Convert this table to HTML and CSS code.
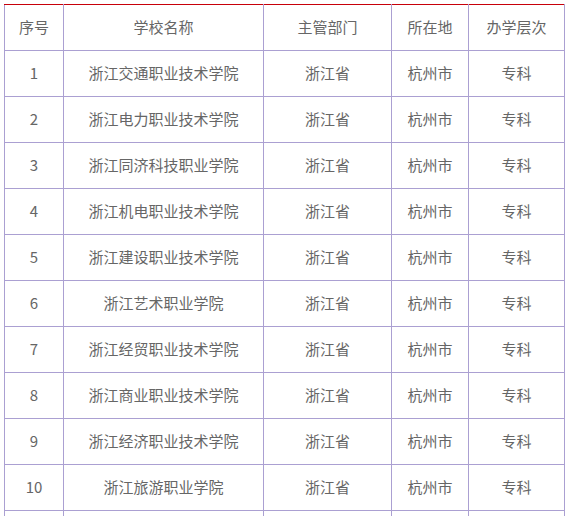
FILE: index.html
```html
<!DOCTYPE html>
<html lang="zh">
<head>
<meta charset="utf-8">
<link rel="stylesheet" href="styles.css">
</head>
<body>
<table class="list">
<colgroup>
<col class="c1"><col class="c2"><col class="c3"><col class="c4"><col class="c5">
</colgroup>
<thead>
<tr><td>序号</td><td>学校名称</td><td>主管部门</td><td>所在地</td><td>办学层次</td></tr>
</thead>
<tbody>
<tr><td>1</td><td>浙江交通职业技术学院</td><td>浙江省</td><td>杭州市</td><td>专科</td></tr>
<tr><td>2</td><td>浙江电力职业技术学院</td><td>浙江省</td><td>杭州市</td><td>专科</td></tr>
<tr><td>3</td><td>浙江同济科技职业学院</td><td>浙江省</td><td>杭州市</td><td>专科</td></tr>
<tr><td>4</td><td>浙江机电职业技术学院</td><td>浙江省</td><td>杭州市</td><td>专科</td></tr>
<tr><td>5</td><td>浙江建设职业技术学院</td><td>浙江省</td><td>杭州市</td><td>专科</td></tr>
<tr><td>6</td><td>浙江艺术职业学院</td><td>浙江省</td><td>杭州市</td><td>专科</td></tr>
<tr><td>7</td><td>浙江经贸职业技术学院</td><td>浙江省</td><td>杭州市</td><td>专科</td></tr>
<tr><td>8</td><td>浙江商业职业技术学院</td><td>浙江省</td><td>杭州市</td><td>专科</td></tr>
<tr><td>9</td><td>浙江经济职业技术学院</td><td>浙江省</td><td>杭州市</td><td>专科</td></tr>
<tr><td>10</td><td>浙江旅游职业学院</td><td>浙江省</td><td>杭州市</td><td>专科</td></tr>
<tr><td></td><td></td><td></td><td></td><td></td></tr>
</tbody>
</table>
</body>
</html>
```
FILE: styles.css
```css
html, body {
  margin: 0;
  padding: 0;
  background: #fff;
}
body {
  padding: 4px 0 0 4px;
  font-family: "Noto Sans CJK SC", "Noto Sans", sans-serif;
  font-size: 15px;
  color: #666;
}
.list {
  border-collapse: collapse;
  table-layout: fixed;
  width: 560px;
  border-top: 1px solid #c8000a;
}
.c1 { width: 59px; }
.c2 { width: 200px; }
.c3 { width: 128px; }
.c4 { width: 77px; }
.c5 { width: 96px; }
.list td {
  border: 1px solid #aba0d2;
  height: 43px;
  padding: 0 0 2px;
  text-align: center;
  vertical-align: middle;
  line-height: 20px;
}
.list thead td {
  border-top: 1px solid #c8000a;
}
```
